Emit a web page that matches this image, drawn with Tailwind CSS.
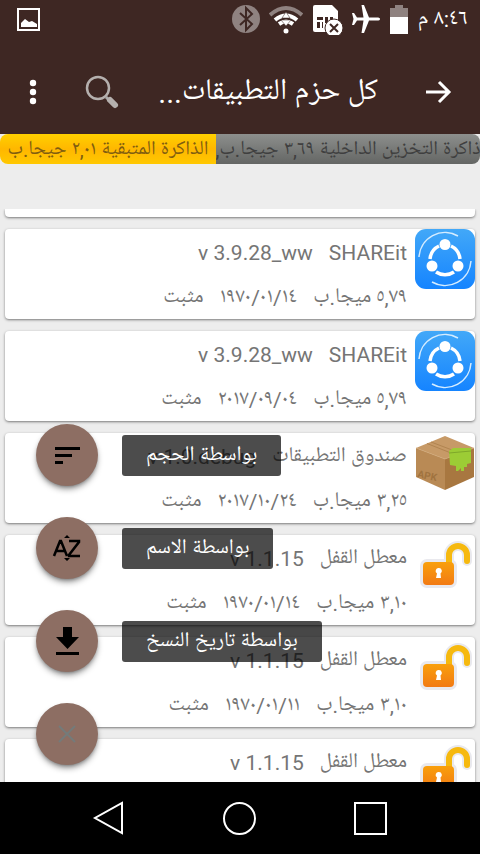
<!DOCTYPE html>
<html lang="ar" dir="rtl">

<head>
    <meta charset="UTF-8">
    <meta name="viewport" content="width=device-width, initial-scale=1.0">
    <title>كل حزم التطبيقات</title>
    <script src="https://cdn.jsdelivr.net/npm/@tailwindcss/browser@4"></script>
</head>

<body class="h-screen flex flex-col overflow-hidden bg-[#ededed] font-[Roboto,'Noto_Naskh_Arabic_UI','DejaVu_Sans',sans-serif] text-[#757575]">
    <!-- Shared icons -->
    <svg class="absolute size-0" aria-hidden="true">
        <defs>
            <linearGradient id="blue" x1="0" y1="0" x2="0" y2="1">
                <stop offset="0" stop-color="#42a8f8" />
                <stop offset="1" stop-color="#1584ff" />
            </linearGradient>
            <linearGradient id="orange" x1="0" y1="0" x2="0" y2="1">
                <stop offset="0" stop-color="#f9a00c" />
                <stop offset="1" stop-color="#f27a14" />
            </linearGradient>
        </defs>
        <symbol id="shareit" viewBox="0 0 60 60">
            <rect width="60" height="60" rx="11" fill="url(#blue)" />
            <path d="M4 28A26 26 0 0 1 43 7" fill="none" stroke="#d4ecff" stroke-width="1.5" />
            <path d="M56 32A26 26 0 0 1 17 53" fill="none" stroke="#d4ecff" stroke-width="1.5" />
            <g fill="none" stroke="#fff" stroke-width="3.5">
                <path d="M24 17A16 16 0 0 0 15 30" />
                <path d="M36 17A16 16 0 0 1 45 30" />
                <path d="M21 43A16 16 0 0 0 39 43" />
            </g>
            <circle cx="30" cy="15.500" r="5.500" fill="#fff" />
            <circle cx="17" cy="37" r="5.500" fill="#fff" />
            <circle cx="43" cy="37" r="5.500" fill="#fff" />
        </symbol>
        <symbol id="box" viewBox="0 0 60 60">
            <path d="M1 15 30 3 59 15 30 26z" fill="#c79a67" />
            <path d="M1 15 30 26V57L1 44z" fill="#b98a55" />
            <path d="M59 15 30 26V57L59 44z" fill="#a87740" />
            <path d="M12 10.500 41 22M16 9 45 20" stroke="#b18450" />
            <path d="M1 15 30 26 59 15" fill="none" stroke="#d0a877" stroke-width=".7" />
            <path d="M34 18 38 15 56 15V30L52 31V34H49V38H46V35L43 38H41V33L35 32z" fill="#9ccc35" />
            <path d="M34 20 56 18" stroke="#7fa82a" />
            <text x="2" y="44" direction="ltr" font-size="10" font-weight="700" fill="#a0733f" transform="rotate(12 2 44)">APK</text>
        </symbol>
        <symbol id="lock" viewBox="0 0 60 60">
            <g fill="#e9e9ee" stroke="#e9e9ee" stroke-width="6" stroke-linejoin="round">
                <rect x="8" y="27" width="31" height="23" rx="4" />
                <path d="M34 27V20A9 9 0 0 1 52 20V26" fill="none" stroke-width="10" stroke-linecap="round" />
            </g>
            <path d="M34 28V20A9 9 0 0 1 52 20V26" fill="none" stroke="#f6b90f" stroke-width="6" stroke-linecap="round" />
            <rect x="8" y="27" width="31" height="23" rx="4" fill="url(#orange)" />
            <path d="M24 33A3 3 0 0 1 25.500 38.500L26 43H21L22 38.500A3 3 0 0 1 24 33z" fill="#fff" />
        </symbol>
    </svg>

    <header class="shrink-0 bg-[#3e2723] text-white">
        <!-- Status bar -->
        <div class="h-[38px] flex items-center gap-[9px] pr-3 pl-4 text-[22px]">
            <span>٨:٤٦ م</span>
            <svg class="w-5 h-8" viewBox="0 0 20 32">
                <path d="M1 5H6V2H14V5H19V14H1z" fill="#8f8280" />
                <path d="M1 14H19V31H1z" fill="#fff" />
            </svg>
            <svg class="w-7 h-8" viewBox="0 0 28 32">
                <path d="M28 16c0-1-1-1.500-3-1.500H17L12 2H9.500L11.500 14.500H5L2 10H0L1.500 16 0 22H2L5 17.500H11.500L9.500 30H12L17 17.500H25c2 0 3-.5 3-1.500z" fill="#fff" />
            </svg>
            <svg class="w-[31px] h-8" viewBox="0 0 31 32">
                <path d="M3 2H20L26 8V29H3Q1 29 1 27V4Q1 2 3 2z" fill="#fff" />
                <path d="M5 14H11V17H5zM13 14H16V20H13zM18 14H21V17H18zM5 19H8V25H5zM10 19H11V25H10z" fill="#3e2723" />
                <circle cx="22" cy="25" r="9" fill="#fff" stroke="#3e2723" />
                <path d="M18 21 26 29M26 21 18 29" stroke="#3e2723" stroke-width="2" />
            </svg>
            <svg class="w-[34px] h-8" viewBox="0 0 34 32">
                <path d="M1 12Q17-2 33 12" fill="none" stroke="#8f8280" stroke-width="4" />
                <path d="M6 17Q17 8 28 17M10 21Q17 16 24 21" fill="none" stroke="#fff" stroke-width="4" />
                <path d="M17 9 21 15H13zM12 17H22L17 23z" fill="#fff" stroke="#3e2723" stroke-width=".5" />
                <circle cx="17" cy="28" r="2.500" fill="#fff" />
            </svg>
            <svg class="size-7" viewBox="0 0 28 28">
                <circle cx="14" cy="14" r="14" fill="#8f8280" />
                <path d="M8 8 20 19 14 25V3L20 9 8 20" fill="none" stroke="#3e2723" stroke-width="2" />
            </svg>
            <svg class="size-6 mr-auto" viewBox="0 0 24 24">
                <path d="M2 2H23V23H2z" fill="none" stroke="#fff" stroke-width="2" />
                <path d="M5 20V16L9 12 13 15 16 14 21 17V20z" fill="#fff" />
            </svg>
        </div>
        <!-- Toolbar -->
        <div class="h-24 flex items-center pl-[19px] pr-[28px] pt-3">
            <button aria-label="رجوع">
                <svg class="size-7" viewBox="0 0 28 28" fill="none" stroke="#fff" stroke-width="3">
                    <path d="M2 14H24M15 4 25 14 15 24" />
                </svg>
            </button>
            <h1 class="flex-1 pr-[46px] pt-0.5 text-3xl whitespace-nowrap">كل حزم التطبيقات...</h1>
            <button aria-label="بحث">
                <svg class="size-9" viewBox="0 0 36 36">
                    <path d="M22 23 25 26" stroke="#aaa" stroke-width="3" />
                    <path d="M26 26 31 31" stroke="#b5b0ae" stroke-width="6" stroke-linecap="round" />
                    <circle cx="14" cy="14" r="11" fill="none" stroke="#b5b0ae" stroke-width="2.500" />
                </svg>
            </button>
            <button aria-label="المزيد" class="mr-[37px]">
                <svg class="size-7" viewBox="0 0 28 28" fill="#fff">
                    <circle cx="14" cy="5" r="3.200" />
                    <circle cx="14" cy="14" r="3.200" />
                    <circle cx="14" cy="23" r="3.200" />
                </svg>
            </button>
        </div>
    </header>

    <!-- Storage usage -->
    <div class="shrink-0 h-[30px] flex rounded-lg overflow-hidden text-xl leading-8 whitespace-nowrap">
        <div class="w-[55%] flex justify-center bg-linear-to-b from-[#8d8f8d] to-[#646664] text-[#3f3f3f]">
            <span class="leading-8">ذاكرة التخزين الداخلية ٣,٦٩ جيجا.ب,</span>
        </div>
        <div class="flex-1 flex justify-center bg-linear-to-b from-[#ffd000] via-[#ffb700] to-[#ffc800] text-[#805d10]">
            <span class="leading-8">الذاكرة المتبقية ٢,٠١ جيجا.ب</span>
        </div>
    </div>

    <main class="relative flex-1 min-h-0 pt-[45px]">
        <ul class="h-full overflow-hidden flex flex-col gap-3 px-[5px]">
            <li class="shrink-0 h-2 rounded-b bg-white shadow-sm shadow-black/40"></li>
            <li class="shrink-0 flex gap-2 rounded bg-white shadow-sm shadow-black/40 pb-0.5">
                <svg class="size-15"><use href="#shareit" /></svg>
                <div>
                    <div class="h-12 pt-0.5 flex items-center gap-4 text-[21px]"><span>SHAREit</span><span dir="ltr">v 3.9.28_ww</span></div>
                    <div class="h-10 pt-1 flex items-center gap-4 text-[21px]"><span>٥,٧٩ ميجا.ب</span><span>١٩٧٠/٠١/١٤</span><span>مثبت</span></div>
                </div>
            </li>
            <li class="shrink-0 flex gap-2 rounded bg-white shadow-sm shadow-black/40 pb-0.5">
                <svg class="size-15"><use href="#shareit" /></svg>
                <div>
                    <div class="h-12 pt-0.5 flex items-center gap-4 text-[21px]"><span>SHAREit</span><span dir="ltr">v 3.9.28_ww</span></div>
                    <div class="h-10 pt-1 flex items-center gap-4 text-[21px]"><span>٥,٧٩ ميجا.ب</span><span>٢٠١٧/٠٩/٠٤</span><span>مثبت</span></div>
                </div>
            </li>
            <li class="shrink-0 flex gap-2 rounded bg-white shadow-sm shadow-black/40 pb-0.5">
                <svg class="size-15"><use href="#box" /></svg>
                <div>
                    <div class="h-12 pt-0.5 flex items-center gap-4 text-[21px]"><span>صندوق التطبيقات</span><span dir="ltr">v 1.0.debug</span></div>
                    <div class="h-10 pt-1 flex items-center gap-4 text-[21px]"><span>٣,٢٥ ميجا.ب</span><span>٢٠١٧/١٠/٢٤</span><span>مثبت</span></div>
                </div>
            </li>
            <li class="shrink-0 flex gap-2 rounded bg-white shadow-sm shadow-black/40 pb-0.5">
                <svg class="size-15"><use href="#lock" /></svg>
                <div>
                    <div class="h-12 pt-0.5 flex items-center gap-4 text-[21px]"><span>معطل القفل</span><span dir="ltr">v 1.1.15</span></div>
                    <div class="h-10 pt-1 flex items-center gap-4 text-[21px]"><span>٣,١٠ ميجا.ب</span><span>١٩٧٠/٠١/١٤</span><span>مثبت</span></div>
                </div>
            </li>
            <li class="shrink-0 flex gap-2 rounded bg-white shadow-sm shadow-black/40 pb-0.5">
                <svg class="size-15"><use href="#lock" /></svg>
                <div>
                    <div class="h-12 pt-0.5 flex items-center gap-4 text-[21px]"><span>معطل القفل</span><span dir="ltr">v 1.1.15</span></div>
                    <div class="h-10 pt-1 flex items-center gap-4 text-[21px]"><span>٣,١٠ ميجا.ب</span><span>١٩٧٠/٠١/١١</span><span>مثبت</span></div>
                </div>
            </li>
            <li class="shrink-0 flex gap-2 rounded bg-white shadow-sm shadow-black/40 pb-0.5">
                <svg class="size-15"><use href="#lock" /></svg>
                <div class="h-22">
                    <div class="h-12 pt-0.5 flex items-center gap-4 text-[21px]"><span>معطل القفل</span><span dir="ltr">v 1.1.15</span></div>
                </div>
            </li>
        </ul>

        <!-- Floating sort menu -->
        <div dir="ltr" class="absolute left-9 bottom-[17px] flex flex-col gap-[31px] text-[21px] text-white">
            <button class="flex items-center gap-6">
                <span class="size-[62px] rounded-full bg-[#8d6e63] shadow-md shadow-black/40 flex items-center justify-center">
                    <svg class="size-8" viewBox="0 0 32 32" fill="#000"><path d="M4 8H29V11H4zM4 15H21V18H4zM4 22H12V25H4z" /></svg>
                </span>
                <span dir="rtl" class="h-[41px] px-6 pt-1 rounded-[3px] bg-black/70 flex items-center">بواسطة الحجم</span>
            </button>
            <button class="flex items-center gap-6">
                <span class="size-[62px] rounded-full bg-[#8d6e63] shadow-md shadow-black/40 flex items-center justify-center">
                    <svg class="size-8" viewBox="0 0 32 32" fill="none" stroke="#000" stroke-width="2.500"><path d="M3 24 9 9H10L16 24M5 19H14M18 9H28V10L18 23V24H29" /><path d="M13 6 16 3 19 6zM13 26H19L16 29z" fill="#000" stroke="none" /></svg>
                </span>
                <span dir="rtl" class="h-[41px] px-6 pt-1 rounded-[3px] bg-black/70 flex items-center">بواسطة الاسم</span>
            </button>
            <button class="flex items-center gap-6">
                <span class="size-[62px] rounded-full bg-[#8d6e63] shadow-md shadow-black/40 flex items-center justify-center">
                    <svg class="size-8" viewBox="0 0 32 32" fill="#000"><path d="M12 2H21V12H28L16.500 24 5 12H12zM5 27H28V30H5z" /></svg>
                </span>
                <span dir="rtl" class="h-[41px] px-6 pt-1 rounded-[3px] bg-black/70 flex items-center">بواسطة تاريخ النسخ</span>
            </button>
            <button aria-label="إغلاق" class="size-[62px] rounded-full bg-[#8d6e63] shadow-md shadow-black/40 flex items-center justify-center">
                <svg class="size-8" viewBox="0 0 32 32" stroke="#747b7a" stroke-width="2"><path d="M8 8 24 24M24 8 8 24" /></svg>
            </button>
        </div>
    </main>

    <!-- Navigation bar -->
    <nav dir="ltr" class="shrink-0 h-18 bg-black flex items-center justify-center gap-[95px]">
        <button aria-label="السابق">
            <svg class="size-9" viewBox="0 0 36 36" fill="none" stroke="#fff" stroke-width="2"><path d="M31 3V33L4 18z" /></svg>
        </button>
        <button aria-label="الرئيسية">
            <svg class="size-9" viewBox="0 0 36 36" fill="none" stroke="#fff" stroke-width="2"><circle cx="17.500" cy="18.500" r="15.500" /></svg>
        </button>
        <button aria-label="التطبيقات الأخيرة">
            <svg class="size-9" viewBox="0 0 36 36" fill="none" stroke="#fff" stroke-width="2"><path d="M2 3H33V34H2z" /></svg>
        </button>
    </nav>
</body>

</html>
